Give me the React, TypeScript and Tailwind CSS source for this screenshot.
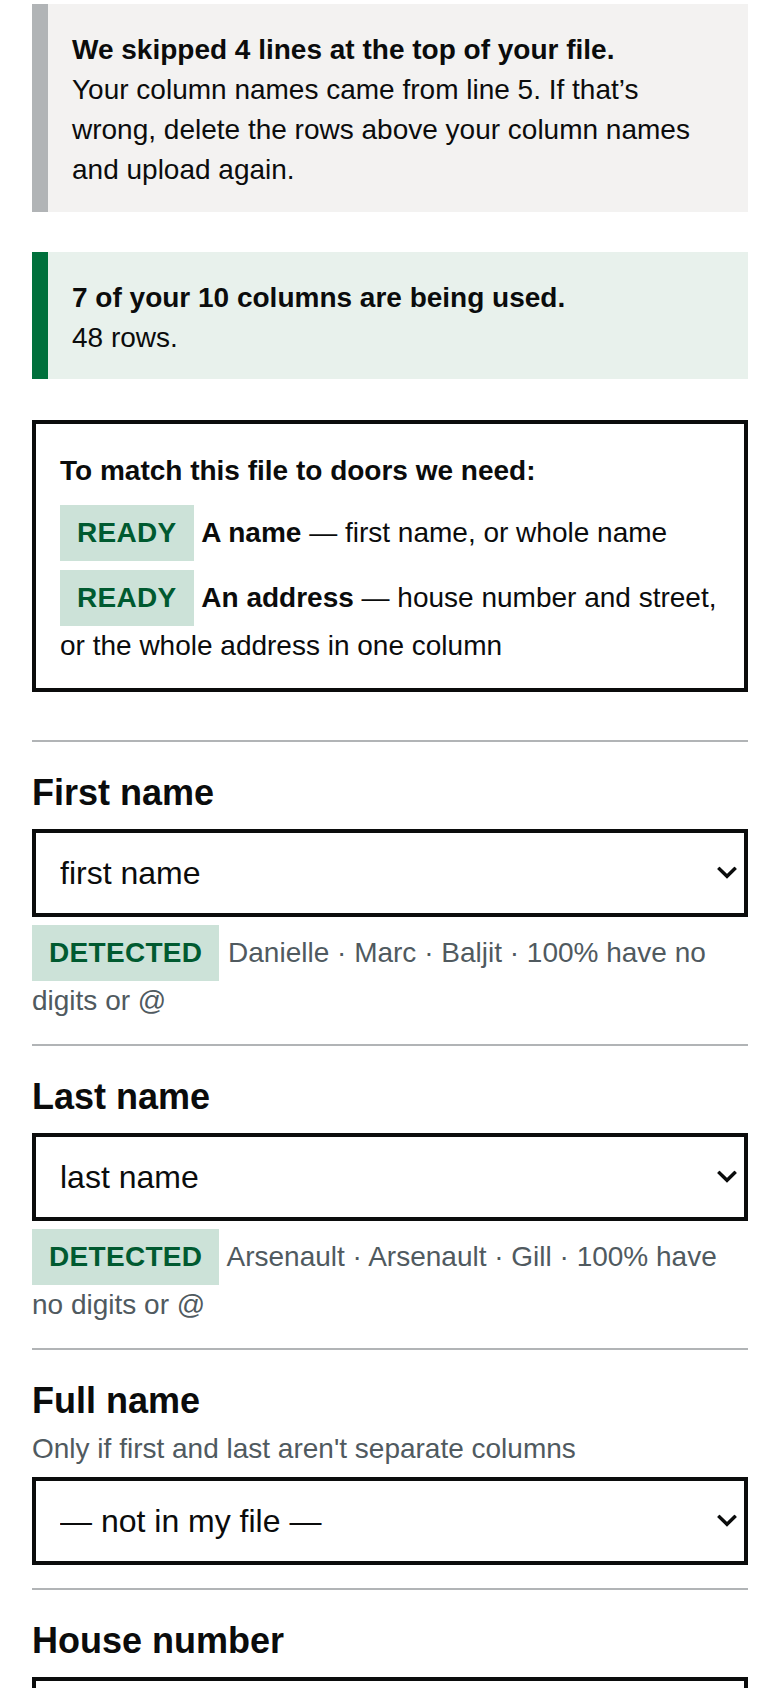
import type { ReactNode } from 'react';

function Tag({ children, className = '' }: { children: ReactNode; className?: string }) {
  return (
    <strong
      className={`inline-block bg-[#cce2d8] px-[17px] py-2 font-bold leading-[40px] tracking-[0.3px] text-[#005a30] ${className}`}
    >
      {children}
    </strong>
  );
}

function Chevron() {
  return (
    <svg
      className="pointer-events-none absolute right-[11px] top-1/2 -translate-y-1/2"
      width="20"
      height="13"
      viewBox="0 0 20 13"
      fill="none"
    >
      <path d="M2.5 2.5 L10 9.8 L17.5 2.5" stroke="#0b0c0c" strokeWidth="3.4" strokeLinecap="square" />
    </svg>
  );
}

function Field({
  label,
  hint,
  value,
  options,
  detected,
}: {
  label: string;
  hint?: string;
  value: string;
  options: string[];
  detected?: string;
}) {
  return (
    <div>
      <div className="h-[2px] bg-[#b1b4b6]" />
      <div className="pb-[23px] pt-[31px]">
        <label className={`block text-[36px] font-bold leading-[40px] ${hint ? 'mb-2' : 'mb-4'}`}>
          {label}
        </label>
        {hint && <p className="mb-2 text-[#505a5f]">{hint}</p>}
        <div className="relative">
          <select
            defaultValue={value}
            className="block h-[88px] w-full appearance-none border-4 border-[#0b0c0c] bg-white pl-6 pr-12 text-[32px] text-[#0b0c0c] outline-none"
          >
            {options.map((o) => (
              <option key={o} value={o}>
                {o}
              </option>
            ))}
          </select>
          <Chevron />
        </div>
        {detected && (
          <p className="mt-2 text-[#505a5f]">
            <Tag className="mr-[1px]">DETECTED</Tag> {detected}
          </p>
        )}
      </div>
    </div>
  );
}

const columns = ['— not in my file —', 'first name', 'last name', 'street', 'city'];

export default function App() {
  return (
    <div className="bg-white px-8 pt-[4px] font-['Liberation_Sans',Arial,sans-serif] text-[28px] leading-[40px] text-[#0b0c0c]">
      {/* Skipped lines notice */}
      <div className="border-l-[16px] border-[#b1b4b6] bg-[#f3f2f1] pb-[22px] pl-6 pr-6 pt-[26px]">
        <p className="font-bold">We skipped 4 lines at the top of your file.</p>
        <p>
          Your column names came from line 5. If that’s wrong, delete the rows above your column names
          and upload again.
        </p>
      </div>

      {/* Columns used */}
      <div className="mt-10 border-l-[16px] border-[#00703c] bg-[#e8f1ec] pb-[21px] pl-6 pr-6 pt-[26px]">
        <p className="font-bold">7 of your 10 columns are being used.</p>
        <p>48 rows.</p>
      </div>

      {/* Requirements */}
      <div className="mb-[48px] mt-[41px] border-4 border-[#0b0c0c] px-6 pb-[22px] pt-[27px]">
        <p className="mb-[14px] font-bold">To match this file to doors we need:</p>
        <p className="mb-[9px]">
          <Tag>READY</Tag> <strong className="font-bold">A name</strong> — first name, or whole name
        </p>
        <p>
          <Tag>READY</Tag> <strong className="font-bold">An address</strong> — house number and street,
          or the whole address in one column
        </p>
      </div>

      <Field
        label="First name"
        value="first name"
        options={columns}
        detected="Danielle · Marc · Baljit · 100% have no digits or @"
      />
      <Field
        label="Last name"
        value="last name"
        options={columns}
        detected="Arsenault · Arsenault · Gill · 100% have no digits or @"
      />
      <Field
        label="Full name"
        hint="Only if first and last aren't separate columns"
        value="— not in my file —"
        options={columns}
      />
      <Field label="House number" value="— not in my file —" options={columns} />
    </div>
  );
}
